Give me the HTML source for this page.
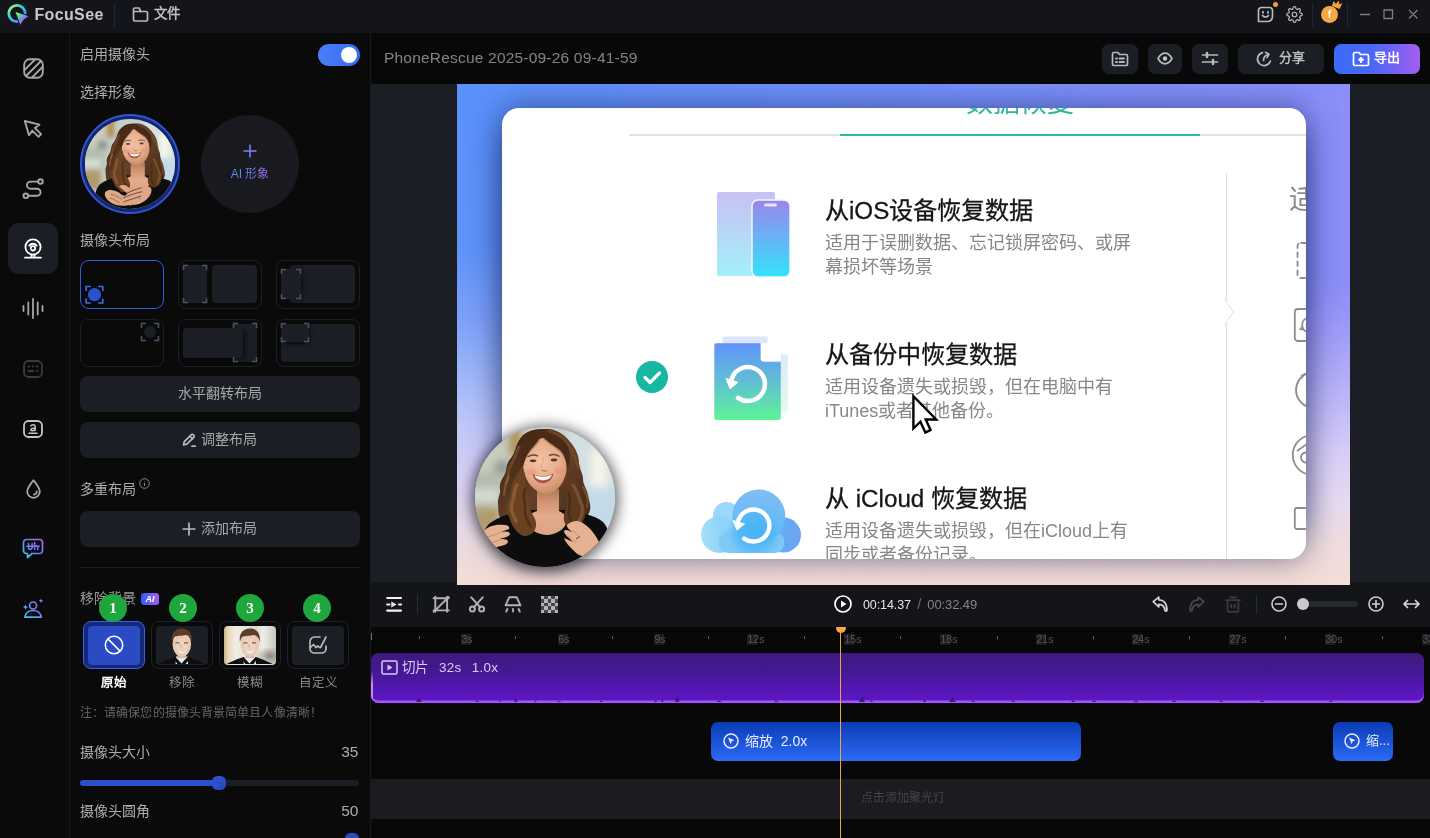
<!DOCTYPE html>
<html lang="zh-CN">
<head>
<meta charset="utf-8">
<title>FocuSee</title>
<style>
*{margin:0;padding:0;box-sizing:border-box}
html,body{width:1430px;height:838px;overflow:hidden;background:#0a0a0a}
body{font-family:"Liberation Sans",sans-serif;color:#b4b4b4;position:relative;font-size:14px;will-change:transform}
.abs{position:absolute}
svg{position:absolute;overflow:visible}
.ic{fill:none;stroke:#b9b9b9;stroke-width:1.7;stroke-linecap:round;stroke-linejoin:round}
/* title bar */
#titlebar{left:0;top:0;width:1430px;height:34px;background:#14151a}
#brand{left:34.500px;top:5px;font-weight:bold;font-size:16px;line-height:20px;color:#c9c9c9;letter-spacing:.35px}
#file{left:154px;top:4px;font-size:13.500px;line-height:20px;color:#c4c4c4;-webkit-text-stroke:.4px #c4c4c4}
.vsep{width:1px;background:#23273a}
/* left bar */
#leftbar{left:0;top:33px;width:70px;height:805px;background:#0a0a0a;border-right:1px solid #17181c}
#panel{left:70px;top:33px;width:300px;height:805px;background:#0a0a0a}
#sel{left:8px;top:223px;width:50px;height:51px;border-radius:11px;background:#1c1e26}
.lbl{color:#adadad;font-size:14px;line-height:18px;white-space:nowrap}
.btn{background:#1c1e26;border-radius:8px;color:#a8a8a8;font-size:14px;text-align:center;white-space:nowrap}
.lay{width:84px;height:48px;border:1px solid #1c1e26;border-radius:8px;background:#0a0a0a}
.lay i{position:absolute;background:#1c1e26;border-radius:4px}
/* main */
#hdr{left:371px;top:33px;width:1059px;height:51px;background:#080808}
#ptitle{left:384px;top:48px;font-size:15.5px;line-height:20px;color:#848484;white-space:nowrap;letter-spacing:.2px}
.hb{top:44px;height:30px;border-radius:7px;background:#1c1e26}
#stage{left:371px;top:84px;width:1059px;height:498px;background:#1c1e26}
#canvas{z-index:2;left:457px;top:84px;width:893px;height:501px;overflow:hidden;background:#b9b2f5}
#card{left:45px;top:24px;width:804px;height:451px;border-radius:17px;background:#fff;overflow:hidden}
#cardsh{left:45px;top:24px;width:804px;height:451px;border-radius:17px;box-shadow:0 0 30px rgba(5,15,60,.5)}
.t1{font-size:24.200px;line-height:30px;color:#161616;white-space:nowrap;filter:blur(.35px);margin-top:1px;-webkit-text-stroke:.3px #161616}
.t2{font-size:18px;line-height:24px;color:#878787;white-space:nowrap;filter:blur(.35px);margin-top:1px}
/* timeline */
#tbar{left:371px;top:582px;width:1059px;height:45px;background:#141519}
#tl{left:371px;top:627px;width:1059px;height:211px;background:#080808}
.rl{top:633px;width:30px;margin-left:-15px;text-align:center;font-size:10.5px;line-height:12px;color:#585858}
.tk{top:636px;width:1px;height:3px;background:#5a5a5a}
#clip{left:371px;top:653px;width:1053px;height:50px;border-radius:7.500px;background:linear-gradient(#3c1a7c 0%,#47189a 45%,#5e16c8 96%);overflow:hidden;box-shadow:inset 0 -2.500px 0 #a354ff}
#z1{left:711px;top:721.500px;width:370px;height:39.500px;border-radius:7px;background:linear-gradient(#0b3bb4,#2b6bf6)}
#z2{left:1333px;top:721.500px;width:60px;height:39.500px;border-radius:7px;background:linear-gradient(#0b3bb4,#2b6bf6)}
#spot{left:371px;top:779px;width:1059px;height:40px;background:#1b1c21}
#ph{left:840px;top:630px;width:1.200px;height:208px;background:#eea443}
.gb{top:594px;width:28px;height:28px;border-radius:14px;background:#1fa63d;color:#fff;font-family:"Liberation Serif",serif;font-weight:bold;font-size:15px;line-height:28px;text-align:center}
.bl{top:675px;width:60px;text-align:center;font-size:12.5px;line-height:16px;color:#8a8a8a;white-space:nowrap}
.rb{top:634px;width:9.500px;height:10.500px;background:#1b1d23}
</style>
</head>
<body>
<svg width="0" height="0" style="left:0;top:0">
<defs>
<filter id="bl1" x="-10%" y="-10%" width="120%" height="120%"><feGaussianBlur stdDeviation="0.75"/></filter>
<filter id="blh" x="-5%" y="-5%" width="110%" height="110%"><feGaussianBlur stdDeviation="0.45"/></filter>
<filter id="bl3" x="-20%" y="-20%" width="140%" height="140%"><feGaussianBlur stdDeviation="4"/></filter>
<clipPath id="c140"><circle cx="70" cy="70" r="70"/></clipPath>
<linearGradient id="hairg" x1="0" y1="0" x2="1" y2="1"><stop offset="0" stop-color="#341e11"/><stop offset=".5" stop-color="#644026"/><stop offset="1" stop-color="#3e2415"/></linearGradient>
<radialGradient id="faceg" gradientUnits="userSpaceOnUse" cx="66" cy="34" r="34"><stop offset="0" stop-color="#f3c4a4"/><stop offset=".55" stop-color="#e8ae8c"/><stop offset="1" stop-color="#c98a66"/></radialGradient>
<linearGradient id="skng" gradientUnits="userSpaceOnUse" x1="0" y1="62" x2="0" y2="108"><stop offset="0" stop-color="#b07656"/><stop offset=".3" stop-color="#d29673"/><stop offset=".6" stop-color="#e2ab89"/><stop offset="1" stop-color="#dca482"/></linearGradient>
<g id="wbg"><rect width="140" height="140" fill="#c3cfca"/>
 <g filter="url(#bl3)">
  <rect x="-5" y="-5" width="40" height="50" fill="#c9cdbd"/>
  <rect x="34" y="-5" width="11" height="34" fill="#b08a44"/>
  <ellipse cx="27" cy="42" rx="8" ry="9" fill="#8a918a"/>
  <rect x="-5" y="45" width="36" height="35" fill="#b4bcad"/>
  <rect x="-5" y="62" width="30" height="14" fill="#d6dcd2"/>
  <rect x="-5" y="80" width="30" height="30" fill="#b39a6c"/>
  <rect x="92" y="-5" width="55" height="110" fill="#d3dfe2"/>
  <rect x="116" y="22" width="16" height="40" fill="#f4f6e6"/>
  <rect x="100" y="60" width="45" height="40" fill="#c4dae8"/>
 </g>
 </g>
<g id="wbody"><g filter="url(#bl1)">
  <!-- hair back (wavy outline) -->
  <path d="M66 2C55 2 47 7 43 15 40 21 40 26 36 31 31 36 32 42 30 47 27 52 24 56 25 62 26 67 22 71 23 77 24 83 22 88 27 93 30 98 31 103 37 106 44 111 54 110 60 106L88 103C93 107 101 106 106 101 111 97 111 91 114 86 117 80 114 74 113 68 112 62 108 58 108 52 108 46 104 42 104 36 104 29 101 22 96 16 91 9 83 3 74 2 71 2 68 2 66 2Z" fill="url(#hairg)"/>
  <!-- body -->
  <path d="M6 140C6 120 6 104 14 97 22 90 36 86 50 83L92 83C104 85 120 88 128 95 136 103 136 122 134 140Z" fill="#0a0a0d"/>
  <!-- neck/chest -->
  <path d="M62 62h22v22c6 3 9 6 8 11-3 8-12 13-20 13s-18-5-21-13c-1-5 3-8 11-11z" fill="url(#skng)"/>
  <!-- face -->
  <path d="M48 36C48 20 58 11 70 11 83 11 92 21 92 36 92 48 88 58 80 64 75 68 67 68 62 64 53 58 48 48 48 36Z" fill="url(#faceg)"/>
  <ellipse cx="56.500" cy="45" rx="5" ry="3.500" fill="#e28e78" opacity=".45"/><ellipse cx="84" cy="44" rx="5" ry="3.500" fill="#e28e78" opacity=".45"/>
  <!-- bangs -->
  <path d="M64 3C54 6 47 16 46 28 45 34 45 40 47 44 49 34 53 27 59 21 63 17 66 12 66 8 70 16 78 19 84 24 89 28 92 36 92 44 95 36 96 26 92 18 88 10 78 3 64 3Z" fill="#43261450"/>
  <path d="M64 3C54 6 47 16 46 28 45 34 45 40 47 44 49 34 52 26 58 20 62 16 65 11 66 7 70 14 79 18 85 23 90 28 92 36 92 44 95 36 96 26 92 18 88 10 78 3 64 3Z" fill="#4a2b18"/>
  <!-- front locks, wavy -->
  <path d="M47 38C45 45 41 49 38 55 35 61 37 66 34 72 31 78 31 84 34 90 36 96 39 103 46 108 52 111 60 107 61 99 62 92 57 88 55 82 53 76 54 70 52 64 50 58 51 52 50 47Z" fill="#6b4222"/>
  <path d="M92 40C94 47 96 52 100 58 104 64 104 70 108 76 112 83 111 90 107 96 104 101 97 103 93 100 88 96 88 90 90 84 92 78 92 72 92 66 92 58 92 48 92 40Z" fill="#5c381e"/>
  <!-- hair light / dark strokes (soft) -->
  <g fill="none" stroke-linecap="round" filter="url(#bl1)">
   <path d="M44 20c-4 8-4 12-8 18-4 6-2 12-5 18" stroke="#8a5a34" stroke-width="3" opacity=".55"/>
   <path d="M42 58c-4 6-2 12-5 18-2 6 1 12 4 18" stroke="#9a6a40" stroke-width="3.500" opacity=".6"/>
   <path d="M50 62c-3 8 1 14 0 20s2 12 6 18" stroke="#3a2012" stroke-width="2.500" opacity=".55"/>
   <path d="M34 50c-4 6-4 12-5 18" stroke="#a5744a" stroke-width="2" opacity=".5"/>
   <path d="M98 58c5 6 5 12 8 18 3 7 1 12-2 18" stroke="#8e5e38" stroke-width="3.500" opacity=".6"/>
   <path d="M94 66c2 8 0 14 0 20 0 5 2 8 4 11" stroke="#3a2012" stroke-width="2.500" opacity=".5"/>
   <path d="M74 4c10 3 19 9 24 22 2 6 4 10 6 14" stroke="#7a4e2c" stroke-width="3" opacity=".6"/>
   <path d="M108 60c3 6 6 12 4 20" stroke="#9a6a40" stroke-width="2" opacity=".5"/>
  </g>
  <!-- mouth -->
  <path d="M57.500 47c6 3 15 3 21-.8-1 6.500-5.500 10-10.500 10s-9.500-3.200-10.500-9.200z" fill="#a9544a"/>
  <path d="M59.500 48.200c5 2 12.500 2 17.500-.4-1 3.600-4.500 5.400-8.700 5.400s-7.800-1.800-8.800-5z" fill="#fbf6f2"/>
  <!-- eyes / brows / nose -->
  <ellipse cx="58" cy="33.800" rx="3.200" ry="1.400" fill="#3a2a22" opacity=".9"/><ellipse cx="79" cy="33" rx="3.200" ry="1.400" fill="#3a2a22" opacity=".9"/>
  <path d="M52.500 30c3-2.200 7.500-2.400 10.500-.8M74 28.700c3-1.600 7.500-1.400 10.500.8" stroke="#5a3a26" stroke-width="1.400" fill="none" opacity=".9"/>
  <path d="M66.500 42.500c1.200 1.600 3.500 2 5.500.8" stroke="#b57a5c" stroke-width="1.200" fill="none"/>
  <path d="M68.500 30c-.5 4-1.500 8-2.500 11" stroke="#c98e6e" stroke-width="1" fill="none" opacity=".6"/>
 </g>
</g>
<g id="whands1" filter="url(#bl1)">
  <!-- hands -->
  <g fill="#e6b093">
   <path d="M9 104c4-5 12-7 20-6 4 0 6 2 5 4l-8 3c4-1 9-1 9 2 0 2-6 4-10 5 4 0 8 0 8 3-1 3-7 4-11 5-6 1-12-3-14-8-1-3-1-6 1-8z"/>
   <path d="M92 98c4-4 10-5 14-3 8 4 14 12 18 20 2 5-2 11-8 13-6 3-12 1-16-3-6-6-10-10-11-14l9 4c-4-4-9-8-9-11 1-2 5-1 9 2-3-3-7-6-6-8z"/>
  </g>
  <path d="M12 110c5-1 10-3 14-5M14 116c5-1 9-2 13-4M97 103c3 2 6 5 8 8M93 109c3 2 6 4 8 7" stroke="#b8805f" stroke-width=".9" fill="none" opacity=".8"/>
  <path d="M101 112l3.500-2.500" stroke="#6a6a72" stroke-width="1.300"/>
</g>
<g id="whands2" filter="url(#bl1)">
 <g fill="#e0a688">
  <path d="M32 113c5-4 12-3 20 1l18 11c4 3 2 8-3 9-9 2-20 1-28-5-7-5-10-12-7-16z"/>
  <path d="M103 108c-3-4-9-5-15-3-9 3-20 9-27 15-4 4-5 9-1 12 8 4 20 3 29-2 9-5 16-14 14-22z"/>
  <path d="M53 105c3-3 9-3 13 0l9 8-7 5z"/>
 </g>
 <path d="M62 117c8-4 17-8 26-10M59 123c9-4 20-8 30-10M60 129c8-3 18-6 27-9" stroke="#3a2418" stroke-width="1.300" fill="none" opacity=".8"/>
 <path d="M40 117c6 1 12 4 17 8M38 123c6 1 11 4 16 8" stroke="#7a4e38" stroke-width="1.100" fill="none" opacity=".8"/>
 <path d="M50 108l8 10M72 134c6 1 14 0 20-3" stroke="#0a0a0d" stroke-width="2" fill="none" opacity=".7"/>
 <path d="M82 121l4 3" stroke="#6a6a72" stroke-width="1.300"/>
</g>
<symbol id="woman" viewBox="0 0 140 140" overflow="hidden"><g clip-path="url(#c140)"><use href="#wbg"/><use href="#wbody"/><use href="#whands1"/></g></symbol>
<symbol id="woman2" viewBox="0 0 140 140" overflow="hidden"><g clip-path="url(#c140)"><use href="#wbg"/><g transform="translate(9,5)"><use href="#wbody"/></g><use href="#whands2"/></g></symbol>
<symbol id="man" viewBox="0 0 52 38" overflow="hidden">
 <g filter="url(#bl1)">
  <path d="M1 40C4 36 12 34 19.500 31L32 31C39 34 47 36 51 40Z" fill="#0d0d11"/>
  <path d="M20 30.500h11.500l.5 8h-12.500z" fill="#e9e9ef"/>
  <path d="M19.500 31l6 6.500 6-6.500 1.500 2-4 6h-7l-4-6z" fill="#111116"/>
  <rect x="21.500" y="25" width="8.500" height="7" fill="#d8b49c"/>
  <ellipse cx="25.800" cy="18" rx="9.300" ry="12.800" fill="#e8cab2"/>
  <ellipse cx="25.800" cy="20" rx="6" ry="8" fill="#efd6c2" opacity=".7"/>
  <path d="M16 16C14.500 8 19 2.500 26 2.500 33 2.500 37 8 35.500 16 35 12 33 9.500 30 9 26 10 20.500 9.500 18 11 17 12.500 16.500 14 16 16Z" fill="#5c3e2a"/>
  <path d="M21.800 24.500c2.500 1.300 5.500 1.300 8 0-1 2-2.500 3-4 3s-3-1-4-3z" fill="#f6ecec"/>
  <path d="M19.500 17.200c1.200-.6 2.600-.6 3.800 0M28 17.200c1.200-.6 2.600-.6 3.800 0" stroke="#4a3426" stroke-width="1" fill="none"/>
  <path d="M25 18v4" stroke="#cfa88e" stroke-width=".8"/>
 </g>
</symbol>
</defs>
</svg>
<!-- TITLE BAR -->
<div class="abs" id="titlebar"></div>
<div class="abs" id="brand">FocuSee</div>
<div class="abs vsep" style="left:114px;top:3px;height:24px"></div>
<div class="abs" id="file">文件</div>
<div class="abs vsep" style="left:1312px;top:3px;height:23px"></div>
<div class="abs vsep" style="left:1347px;top:3px;height:23px"></div>

<!-- LEFT BAR -->
<div class="abs" id="leftbar"></div>
<div class="abs" id="sel"></div>
<!-- left bar icons -->
<svg style="left:23px;top:58px" width="21" height="21" viewBox="0 0 21 21" fill="none" stroke="#a6a6a6" stroke-width="1.900" stroke-linecap="round"><defs><clipPath id="rsq"><rect x="1.200" y="1.200" width="18.600" height="18.600" rx="5.500"/></clipPath></defs><rect x="1.200" y="1.200" width="18.600" height="18.600" rx="5.500"/><g clip-path="url(#rsq)"><path d="M1 12.500L12.500 1M2.500 18.500L18.500 2.500M8.500 20L20 8.500"/></g></svg>
<svg style="left:23px;top:119px" width="21" height="21" viewBox="0 0 21 21" fill="none" stroke="#a6a6a6" stroke-width="1.900" stroke-linejoin="round"><path d="M1.800 2l4.200 14.200 3.300-4.600 6.200 6.200 2.600-2.600-6.200-6.200 4.600-3.300z"/></svg>
<svg style="left:22px;top:178px" width="23" height="22" viewBox="0 0 23 22" fill="none" stroke="#a6a6a6" stroke-width="1.900" stroke-linecap="round"><circle cx="18.500" cy="3.600" r="2.300"/><circle cx="3.800" cy="17.800" r="2.300"/><path d="M16.200 3.600H8.500a3.500 3.500 0 0 0 0 7.100h6.500a3.500 3.500 0 0 1 0 7.100H6.100"/></svg>
<svg style="left:24px;top:238px" width="18" height="21" viewBox="0 0 18 21" fill="none" stroke="#fff" stroke-width="1.800" stroke-linecap="round"><circle cx="9" cy="9" r="7.600"/><circle cx="9" cy="10.300" r="2.200"/><path d="M5.300 7.600a4.600 4.600 0 0 1 7.400 0M7.600 16.600v3M10.400 16.600v3M1 19.700h16"/></svg>
<svg style="left:22px;top:298px" width="22" height="21" viewBox="0 0 22 21" fill="none" stroke="#a6a6a6" stroke-width="1.800" stroke-linecap="round"><path d="M1.500 8v5M6.300 4.500v12M11 1v19M15.700 4.500v12M20.500 8v5"/></svg>
<svg style="left:23px;top:360px" width="20" height="18" viewBox="0 0 20 18" fill="none" stroke="#3b3b3b" stroke-width="1.800" stroke-linecap="round"><rect x="1" y="1" width="18" height="16" rx="4.500"/><path d="M5.500 6.500h.6M9.700 6.500h.6M13.900 6.500h.6M5.500 11h5M13.900 11h.6" stroke-width="2"/></svg>
<svg style="left:23px;top:420px" width="20" height="18" viewBox="0 0 20 18" fill="none" stroke="#c4c4c4" stroke-width="1.800" stroke-linecap="round"><rect x="1" y="1" width="18" height="16" rx="4.500"/><path d="M6 13.300h8" stroke-width="1.600"/><path d="M12.200 10.500V6.800c0-1.300-.9-2-2.200-2-1.100 0-1.900.4-2.300 1.200M12.200 8.200c-2.500-.2-4.300.3-4.300 1.500 0 .7.700 1.100 1.600 1.100 1.300 0 2.700-.7 2.700-2" stroke-width="1.500"/></svg>
<svg style="left:26px;top:479px" width="15" height="20" viewBox="0 0 15 20" fill="none" stroke="#a6a6a6" stroke-width="1.800" stroke-linecap="round" stroke-linejoin="round"><path d="M7.500 1.200C5 4.500 1.200 8.800 1.200 12.500a6.300 6.300 0 0 0 12.600 0C13.800 8.800 10 4.500 7.500 1.200z"/><path d="M10.800 12.300a3 3 0 0 1-2.800 3.200"/></svg>
<svg style="left:22px;top:538px" width="22" height="22" viewBox="0 0 22 22" fill="none" stroke="url(#gi1)" stroke-width="1.700" stroke-linecap="round" stroke-linejoin="round"><defs><linearGradient id="gi1" gradientUnits="userSpaceOnUse" x1="20" y1="0" x2="2" y2="20"><stop offset="0" stop-color="#c65cf0"/><stop offset=".5" stop-color="#6a7cf8"/><stop offset="1" stop-color="#35d0f8"/></linearGradient></defs><path d="M4.500 1.500h13a3 3 0 0 1 3 3v8a3 3 0 0 1-3 3H10l-4.500 4v-4H4.500a3 3 0 0 1-3-3v-8a3 3 0 0 1 3-3z"/><path d="M6.500 5.500v4a1.800 1.800 0 0 0 3.600 0v-4M12.600 4.500v7M12.600 8.500c.8-1.200 3.200-1.300 3.200.6v2.400M4.800 8.300h12.400" stroke-width="1.500"/></svg>
<svg style="left:22px;top:597px" width="22" height="22" viewBox="0 0 22 22" fill="none" stroke="url(#gi2)" stroke-width="1.700" stroke-linecap="round" stroke-linejoin="round"><defs><linearGradient id="gi2" gradientUnits="userSpaceOnUse" x1="20" y1="0" x2="2" y2="22"><stop offset="0" stop-color="#d255ee"/><stop offset=".45" stop-color="#7a7cf8"/><stop offset="1" stop-color="#2fd6f8"/></linearGradient></defs><circle cx="11.100" cy="8.500" r="3.500"/><path d="M3 20.200c.5-4.200 4-6.700 8.100-6.700s7.600 2.500 8.100 6.700z"/><path d="M3.500 7.500l.8 1.800 1.800.8-1.800.8-.8 1.800-.8-1.800-1.800-.8 1.800-.8zM19 1.500l.7 1.600 1.600.7-1.600.7-.7 1.600-.7-1.600-1.600-.7 1.600-.7z" fill="url(#gi2)" stroke="none"/></svg>


<!-- PANEL -->
<div class="abs" id="panel"></div>
<div class="abs lbl" style="left:80px;top:45px">启用摄像头</div>
<div class="abs" style="left:318px;top:44px;width:42px;height:22px;border-radius:11px;background:linear-gradient(90deg,#4a80f8,#3669f3)"></div>
<div class="abs" style="left:341px;top:47px;width:16px;height:16px;border-radius:8px;background:#fff"></div>
<div class="abs lbl" style="left:80px;top:83px">选择形象</div>
<!-- avatar -->
<div class="abs" style="left:80px;top:114px;width:100px;height:100px;border-radius:50%;background:#14266e;border:2px solid #2f55d6"></div>
<svg style="left:85px;top:119px" width="90" height="90" viewBox="0 0 140 140"><use href="#woman2"/></svg>
<div class="abs" style="left:201px;top:115px;width:98px;height:98px;border-radius:50%;background:#191a1f"></div>
<svg style="left:242px;top:143px" width="16" height="16" viewBox="0 0 16 16"><defs><linearGradient id="gp" gradientUnits="userSpaceOnUse" x1="1" y1="0" x2="15" y2="0"><stop offset="0" stop-color="#4f8df7"/><stop offset="1" stop-color="#a868f2"/></linearGradient></defs><path d="M8 1.5v13" stroke="#7a7cf5" stroke-width="1.6" fill="none"/><path d="M1.5 8h13" stroke="url(#gp)" stroke-width="1.6" fill="none"/></svg>
<div class="abs" style="left:225px;top:166px;width:50px;text-align:center;font-size:12px;line-height:16px;white-space:nowrap;background:linear-gradient(90deg,#4b9af8,#6a7cf5 50%,#c15bf0);-webkit-background-clip:text;background-clip:text;color:transparent">AI 形象</div>
<div class="abs lbl" style="left:80px;top:231px">摄像头布局</div>
<!-- layouts row 1 -->
<div class="abs lay" style="left:80px;top:260px;height:49px;border:1.5px solid #2f5fe0;border-radius:9px"></div>
<div class="abs lay" style="left:178px;top:260px;height:49px"><i style="left:4px;top:4px;width:24px;height:38px"></i><i style="left:33px;top:4px;width:45px;height:38px"></i></div>
<div class="abs lay" style="left:276px;top:260px;height:49px"><i style="left:12px;top:4px;width:66px;height:38px"></i><i style="left:4px;top:8px;width:20px;height:30px;box-shadow:2px 0 4px rgba(0,0,0,.5)"></i></div>
<!-- row 2 -->
<div class="abs lay" style="left:80px;top:318.500px"></div>
<div class="abs lay" style="left:178px;top:319px"><i style="left:54px;top:4px;width:24px;height:38px"></i><i style="left:4px;top:8px;width:60px;height:30px;box-shadow:2px 1px 4px rgba(0,0,0,.6)"></i></div>
<div class="abs lay" style="left:276px;top:319px"><i style="left:4px;top:4px;width:74px;height:38px"></i><i style="left:4px;top:4px;width:28px;height:18px;box-shadow:1px 2px 4px rgba(0,0,0,.6)"></i></div>
<!-- layout marker svgs -->
<svg style="left:80px;top:260px" width="280" height="108" viewBox="0 0 280 108" fill="none" stroke-width="1.6">
  <g stroke="#3b6cf0"><path d="M6.200 31v-4.500h4.500M18.300 26.500h4.500v4.500M22.800 38.500v4.500h-4.500M10.700 43h-4.500v-4.500"/><circle cx="14.500" cy="34.700" r="6.600" fill="#2a52cc" stroke="none"/></g>
 <g stroke="#4a5168">
  <path d="M103.500 10v-4.500h4.500M122 5.500h4.500v4.500M126.500 38v4.500h-4.500M108 42.500h-4.500v-4.500"/>
  <path d="M201.500 14v-4.500h4.500M216 9.500h4.500v4.500M220.500 34v4.500h-4.500M206 38.500h-4.500v-4.500"/>
  <path d="M61.500 68v-4.500h4.500M74 63.500h4.500v4.500M78.500 76v4.500h-4.500M66 80.500h-4.500v-4.500"/>
  <path d="M153.500 68v-4.500h4.500M172 63.500h4.500v4.500M176.500 97v4.500h-4.500M158 101.500h-4.500v-4.500"/>
  <path d="M201.500 68v-4.500h4.500M224 63.500h4.500v4.500M228.500 77v4.500h-4.500M206 81.500h-4.500v-4.500"/>
 </g>
 <circle cx="70" cy="72" r="6" fill="#1c1e26" stroke="none"/>
</svg>
<div class="abs btn" style="left:80px;top:376px;width:280px;height:36px;line-height:35px">水平翻转布局</div>
<div class="abs btn" style="left:80px;top:422px;width:280px;height:36px;line-height:35px;padding-left:18px">调整布局</div>
<svg style="left:181px;top:432px" width="16" height="16" viewBox="0 0 16 16" class="ic" stroke-width="1.5"><path d="M2.500 13l.8-3.300 6.800-6.900a1.600 1.600 0 0 1 2.300 0l.3.300a1.600 1.600 0 0 1 0 2.300l-6.900 6.800zM8.800 4.200l2.800 2.800M11 14.200h3.200"/></svg>
<div class="abs lbl" style="left:80px;top:480px">多重布局</div>
<svg style="left:139px;top:478px" width="11" height="11" viewBox="0 0 11 11" fill="none" stroke="#8a8a8a" stroke-width="1"><circle cx="5.500" cy="5.500" r="4.800"/><path d="M5.500 5v3M5.500 3v.6"/></svg>
<div class="abs btn" style="left:80px;top:511px;width:280px;height:36px;line-height:35px;padding-left:18px">添加布局</div>
<svg style="left:182px;top:522px" width="14" height="14" viewBox="0 0 14 14" class="ic" stroke-width="1.6"><path d="M7 1.200v11.600M1.200 7h11.600"/></svg>
<div class="abs" style="left:80px;top:567px;width:280px;height:1px;background:#1c1c20"></div>
<div class="abs lbl" style="left:80px;top:589px;color:#9a9a9a">移除背景</div>
<div class="abs" style="left:141px;top:593px;width:18px;height:12px;border-radius:3px;background:linear-gradient(90deg,#2f5cf5,#a85cf0);color:#fff;font-size:9px;font-weight:bold;font-style:italic;line-height:12px;text-align:center">AI</div>
<!-- bg items -->
<div class="abs" style="left:83px;top:621px;width:62px;height:48px;border-radius:8px;background:#15287a;border:1.500px solid #3563e6"></div>
<div class="abs" style="left:88px;top:626px;width:52px;height:38.500px;border-radius:4px;background:#2a4bc4"></div>
<svg style="left:104px;top:635px" width="20" height="20" viewBox="0 0 20 20" fill="none" stroke="#fff" stroke-width="1.500"><circle cx="10" cy="10" r="8.700"/><path d="M3.900 3.900l12.200 12.200"/></svg>
<div class="abs" style="left:151px;top:621px;width:62px;height:48px;border-radius:8px;border:1px solid #1d2030"></div>
<div class="abs" style="left:219px;top:621px;width:62px;height:48px;border-radius:8px;border:1px solid #1d2030"></div>
<div class="abs" style="left:287px;top:621px;width:62px;height:48px;border-radius:8px;border:1px solid #1d2030"></div>
<div class="abs" style="left:156px;top:626px;width:52px;height:38.500px;border-radius:4px;background:#1c1e26;overflow:hidden"><svg style="left:0;top:0" width="52" height="38" viewBox="0 0 52 38"><use href="#man"/></svg></div>
<div class="abs" style="left:224px;top:626px;width:52px;height:38.500px;border-radius:4px;background:radial-gradient(ellipse 14px 9px at 46px 30px,#8c8a80 0,rgba(150,148,138,0) 100%),linear-gradient(90deg,#c9b284 0,#e6d8ba 8%,#f0ede5 22%,#e5e3db 45%,#dad7cd 60%,#efede7 75%,#cac6ba 100%);overflow:hidden"><svg style="left:0;top:0" width="52" height="38" viewBox="0 0 52 38"><use href="#man"/></svg></div>
<div class="abs" style="left:292px;top:626px;width:52px;height:38.500px;border-radius:4px;background:#1c1e26"></div>
<svg style="left:308px;top:635px" width="20" height="20" viewBox="0 0 20 20" class="ic" stroke-width="1.600"><path d="M12 2H6.500A4.500 4.500 0 0 0 2 6.500v7A4.500 4.500 0 0 0 6.500 18h7a4.500 4.500 0 0 0 4.500-4.500V11M18 2l-5.500 10.500M2.500 12.500l3-3 2.500 3 2-1.500 1.500 1.500"/></svg>
<!-- green badges -->
<div class="abs gb" style="left:99px">1</div><div class="abs gb" style="left:169px">2</div><div class="abs gb" style="left:236px">3</div><div class="abs gb" style="left:303px">4</div>
<div class="abs bl" style="left:84px;color:#fff;font-weight:bold">原始</div>
<div class="abs bl" style="left:152px">移除</div>
<div class="abs bl" style="left:220px">模糊</div>
<div class="abs bl" style="left:288px">自定义</div>
<div class="abs" style="left:80px;top:705px;font-size:12px;line-height:16px;color:#666;white-space:nowrap;letter-spacing:.1px">注：请确保您的摄像头背景简单且人像清晰！</div>
<div class="abs lbl" style="left:80px;top:743px">摄像头大小</div>
<div class="abs lbl" style="left:300px;top:743px;width:58.500px;text-align:right;font-size:15.500px">35</div>
<div class="abs" style="left:80px;top:780px;width:279px;height:6px;border-radius:3px;background:#1c1e26"></div>
<div class="abs" style="left:80px;top:780px;width:140px;height:6px;border-radius:3px;background:#2a4fc8"></div>
<div class="abs" style="left:212px;top:776px;width:14px;height:14px;border-radius:5.500px;background:linear-gradient(135deg,#2f56d2,#2545b4)"></div>
<div class="abs lbl" style="left:80px;top:802px">摄像头圆角</div>
<div class="abs lbl" style="left:300px;top:802px;width:58.500px;text-align:right;font-size:15.500px">50</div>
<div class="abs" style="left:345px;top:832.500px;width:14px;height:14px;border-radius:5.500px;background:#2a4dc2"></div>
<!--PANEL-END-->

<!-- MAIN HEADER -->
<div class="abs" id="hdr"></div>
<div class="abs" id="ptitle">PhoneRescue 2025-09-26 09-41-59</div>
<div class="abs hb" style="left:1102px;width:36px"></div>
<div class="abs hb" style="left:1148px;width:34px"></div>
<div class="abs hb" style="left:1192px;width:36px"></div>
<div class="abs hb" style="left:1238px;width:86px"></div>
<div class="abs hb" style="left:1334px;width:86px;background:linear-gradient(90deg,#3a6bf7 0%,#4a68f6 45%,#a45df0 100%)"></div>
<!-- header button icons -->
<svg style="left:1111px;top:50px" width="18" height="17" viewBox="0 0 18 17" class="ic" stroke="#cfcfcf" stroke-width="1.700"><path d="M1.500 4.500v9.500a1.500 1.500 0 0 0 1.500 1.500h12a1.500 1.500 0 0 0 1.500-1.500V6A1.500 1.500 0 0 0 15 4.500H8.500L7 2.500H3A1.500 1.500 0 0 0 1.500 4z"/><path d="M5 8.500h1M8.500 8.500h4.500M5 12h1M8.500 12h4.500" stroke-width="1.900"/></svg>
<svg style="left:1157px;top:52px" width="16" height="13" viewBox="0 0 16 13" class="ic" stroke="#cfcfcf" stroke-width="1.600"><path d="M1 6.500C3 3 5.500 1.200 8 1.200S13 3 15 6.500C13 10 10.500 11.800 8 11.800S3 10 1 6.500z"/><circle cx="8" cy="6.500" r="1.700" fill="#cfcfcf" stroke-width="1.200"/></svg>
<svg style="left:1201px;top:51px" width="18" height="15" viewBox="0 0 18 15" class="ic" stroke="#cfcfcf" stroke-width="1.700"><path d="M1.500 4h15M1.500 11h15"/><path d="M6 2v4M12 9v4" stroke-width="2.600"/></svg>
<svg style="left:1256px;top:50px" width="16" height="17" viewBox="0 0 16 17" class="ic" stroke="#c9c9c9" stroke-width="1.800"><path d="M6.500 2.600A6.600 6.600 0 1 0 14.400 11"/><path d="M7.500 10.500c0-3.500 1.800-5.500 5-6M9.500 2.300l3.500 2-2 3.300"/></svg>
<div class="abs" style="left:1279px;top:49px;font-size:13px;line-height:18px;color:#c4c4c4;-webkit-text-stroke:.35px #c4c4c4;white-space:nowrap">分享</div>
<svg style="left:1352px;top:50px" width="18" height="17" viewBox="0 0 18 17" fill="none" stroke="#fff" stroke-width="1.700" stroke-linejoin="round"><path d="M1.500 4.500V14A1.500 1.500 0 0 0 3 15.500h12a1.500 1.500 0 0 0 1.500-1.500V6A1.500 1.500 0 0 0 15 4.500H8.500L7 2.500H3A1.500 1.500 0 0 0 1.500 4z"/><path d="M9 13V8.500M6.500 10.500L9 8l2.500 2.500" stroke-width="1.800"/></svg>
<div class="abs" style="left:1374px;top:49px;font-size:13px;line-height:18px;color:#fff;-webkit-text-stroke:.4px #fff;white-space:nowrap">导出</div>
<!-- title bar icons -->
<svg style="left:7px;top:3px" width="24" height="24" viewBox="0 0 24 24"><defs><linearGradient id="lg1" gradientUnits="userSpaceOnUse" x1="3" y1="2" x2="17" y2="19"><stop offset="0" stop-color="#e8e04a"/><stop offset=".3" stop-color="#3be0c0"/><stop offset=".6" stop-color="#38b0f5"/><stop offset="1" stop-color="#5a78f5"/></linearGradient><linearGradient id="lg2" gradientUnits="userSpaceOnUse" x1="9" y1="8" x2="18" y2="21"><stop offset="0" stop-color="#f0e44a"/><stop offset=".35" stop-color="#46e09a"/><stop offset=".65" stop-color="#8a7cf5"/><stop offset="1" stop-color="#e058ee"/></linearGradient></defs><circle cx="10" cy="10.500" r="8.200" fill="none" stroke="url(#lg1)" stroke-width="2.800"/><path d="M7.700 8.200L22.300 13 16.500 17.200 13.200 22.800z" fill="url(#lg2)" stroke="#14151a" stroke-width="1" stroke-linejoin="round"/></svg>
<svg style="left:132px;top:7px" width="17" height="15" viewBox="0 0 17 15" class="ic" stroke="#b0b0b0" stroke-width="1.600"><path d="M1.500 4.500v8a1.500 1.500 0 0 0 1.500 1.500h11a1.500 1.500 0 0 0 1.500-1.500V6A1.500 1.500 0 0 0 14 4.500H1.500zM1.500 5V2.500A1.500 1.500 0 0 1 3 1h4l1.800 3.500"/></svg>
<svg style="left:1257px;top:6px" width="17" height="17" viewBox="0 0 17 17" class="ic" stroke="#7e7e7e" stroke-width="1.700"><path d="M4.500 1.500h8a3 3 0 0 1 3 3v6a5 5 0 0 1-5 5H1.500v-11a3 3 0 0 1 3-3z"/><path d="M6 5.500v1.500M11 5.500v1.500M5.500 9.500c1.500 2 4.500 2 6 0"/></svg>
<div class="abs" style="left:1273px;top:2px;width:5px;height:5px;border-radius:3px;background:#f5a03a"></div>
<svg style="left:1286px;top:6px" width="17" height="17" viewBox="0 0 24 24" class="ic" stroke="#7e7e7e" stroke-width="2.500"><circle cx="12" cy="12" r="3.200"/><path d="M19.400 15a1.650 1.650 0 0 0 .33 1.820l.06.06a2 2 0 1 1-2.830 2.830l-.06-.06a1.650 1.650 0 0 0-1.820-.33 1.650 1.650 0 0 0-1 1.510V21a2 2 0 1 1-4 0v-.09A1.650 1.650 0 0 0 9 19.400a1.650 1.650 0 0 0-1.820.33l-.06.06a2 2 0 1 1-2.830-2.830l.06-.06a1.650 1.650 0 0 0 .33-1.820 1.650 1.650 0 0 0-1.510-1H3a2 2 0 1 1 0-4h.09A1.650 1.650 0 0 0 4.600 9a1.650 1.650 0 0 0-.33-1.820l-.06-.06a2 2 0 1 1 2.830-2.830l.06.06a1.650 1.650 0 0 0 1.820.33H9a1.650 1.650 0 0 0 1-1.510V3a2 2 0 1 1 4 0v.09a1.650 1.650 0 0 0 1 1.510 1.650 1.650 0 0 0 1.820-.33l.06-.06a2 2 0 1 1 2.830 2.830l-.06.06a1.650 1.650 0 0 0-.33 1.820V9a1.650 1.650 0 0 0 1.510 1H21a2 2 0 1 1 0 4h-.09a1.650 1.650 0 0 0-1.510 1z"/></svg>
<div class="abs" style="left:1321px;top:6px;width:17px;height:17px;border-radius:9px;background:#f6a846;color:#fff;font-size:10px;font-weight:bold;line-height:17px;text-align:center">f</div>
<svg style="left:1331px;top:0px" width="12" height="10" viewBox="0 0 12 10"><path d="M1 6l1.500-5 2.500 3 2.500-3.500 1 4 3-1.500-3 6z" fill="#f5a23c"/></svg>
<svg style="left:1358px;top:8px" width="62" height="13" viewBox="0 0 62 13" fill="none" stroke="#7e7e7e" stroke-width="1.300"><path d="M2 6.500h10M26 2h8.500v8.500H26zM51 2l8.500 8.500M59.500 2L51 10.500"/></svg>


<!-- STAGE -->
<div class="abs" id="stage"></div>
<div class="abs" id="canvas">
<div class="abs" style="left:0;top:0;width:893px;height:501px;background:linear-gradient(180deg,#5a91fa 0%,#5f93fa 33%,#7aa0f9 46.500%,#90aff9 54%,#a8bcf9 61%,#c0c8f8 68.700%,#d0cdf5 76%,#dcd2ee 83.400%,#ead9e2 90.800%,#f4ddd5 100%)"></div>
<div class="abs" style="left:0;top:0;width:893px;height:501px;background:linear-gradient(180deg,#8c8ef9 0%,#8c8ef9 39.500%,#9392f9 44%,#a8a4f8 54%,#c0b8f8 64%,#d6cdf7 73.600%,#e6daf0 83.400%,#f0dcde 93%,#f4ddd6 100%);-webkit-mask-image:linear-gradient(90deg,rgba(0,0,0,0) 0%,#000 100%);mask-image:linear-gradient(90deg,rgba(0,0,0,0) 0%,#000 100%)"></div>
<div class="abs" id="cardsh"></div><div class="abs" style="left:45px;top:54px;width:804px;height:385px;box-shadow:0 0 26px rgba(5,15,70,.34)"></div>
<div class="abs" id="card">
 <!-- coordinates inside card: page(x-502,y-108) -->
 <div class="abs" style="left:464px;top:-20px;font-size:27px;line-height:30px;color:#2fb6a2;white-space:nowrap;filter:blur(.4px)">数据恢复</div>
 <div class="abs" style="left:127px;top:26.200px;width:677px;height:1.500px;background:#e2e4e4"></div>
 <div class="abs" style="left:338px;top:25.700px;width:360px;height:2px;background:#2cbba4"></div>
 <div class="abs" style="left:724px;top:65px;width:1px;height:390px;background:#e0e0e0"></div>
 <svg style="left:718px;top:190px" width="16" height="28" viewBox="0 0 16 28"><path d="M6 0v4l8 10-8 10v4" fill="#fff" stroke="#dcdcdc" stroke-width="1"/><rect x="0" y="3" width="6.500" height="22" fill="#fff"/></svg>
 <!-- item 1 -->
 <svg style="left:215px;top:84px" width="74" height="86" viewBox="0 0 74 86" filter="url(#blh)"><defs><linearGradient id="ph1" x1="0" y1="0" x2="0" y2="1"><stop offset="0" stop-color="#c9c0f5"/><stop offset="1" stop-color="#a3f0fb"/></linearGradient><linearGradient id="ph2" x1="0" y1="0" x2="0" y2="1"><stop offset="0" stop-color="#9a85ee"/><stop offset="1" stop-color="#33e3fb"/></linearGradient></defs><rect x="0" y="0" width="58" height="84" rx="2" fill="url(#ph1)"/><rect x="35" y="8" width="38" height="77" rx="6" fill="url(#ph2)" stroke="#f4f6ff" stroke-width="1.500"/><rect x="47" y="11.500" width="13" height="3" rx="1.500" fill="#e9e4fb"/></svg>
 <div class="abs t1" style="left:323px;top:87px">从iOS设备恢复数据</div>
 <div class="abs t2" style="left:323px;top:122px">适用于误删数据、忘记锁屏密码、或屏</div>
 <div class="abs t2" style="left:323px;top:146px">幕损坏等场景</div>
 <!-- item 2 -->
 <svg style="left:134px;top:253px" width="32" height="32" viewBox="0 0 32 32" filter="url(#blh)"><circle cx="16" cy="16" r="16" fill="#14b8a2"/><path d="M9 16.500l5 5 9.500-9.500" fill="none" stroke="#fff" stroke-width="3.200" stroke-linecap="round" stroke-linejoin="round"/></svg>
 <svg style="left:211px;top:228.500px" width="80" height="86" viewBox="0 0 80 86" filter="url(#blh)"><defs><linearGradient id="fg1" x1="0" y1="0" x2="0" y2="1"><stop offset="0" stop-color="#6393fb"/><stop offset=".5" stop-color="#60bfd4"/><stop offset="1" stop-color="#5cf595"/></linearGradient><linearGradient id="fg0" x1="0" y1="0" x2="0" y2="1"><stop offset="0" stop-color="#dbe5fc"/><stop offset="1" stop-color="#e2f9ea"/></linearGradient></defs><path d="M9.500-.5h45v18h20.300v55a2 2 0 0 1-2 2H9.500z" fill="url(#fg0)"/><path d="M47.600 6.300H67.800V24.800H50.600a3 3 0 0 1-3-3z" fill="#fff"/><path d="M1.300 8.300a2 2 0 0 1 2-2H47.600v15.500a3 3 0 0 0 3 3h17.200V81a2 2 0 0 1-2 2H3.300a2 2 0 0 1-2-2z" fill="url(#fg1)"/><path d="M19 41.100A17 17 0 1 1 25 60.800" fill="none" stroke="#fff" stroke-width="4.500" stroke-linecap="round"/><path d="M13 41.500l12 3.800-8 6.500z" fill="#fff" stroke="#fff" stroke-width="1" stroke-linejoin="round"/></svg>
 <div class="abs t1" style="left:323px;top:231px">从备份中恢复数据</div>
 <div class="abs t2" style="left:323px;top:266px">适用设备遗失或损毁，但在电脑中有</div>
 <div class="abs t2" style="left:323px;top:290px">iTunes或者其他备份。</div>
 <!-- item 3 -->
 <svg style="left:198px;top:380px" width="104" height="66" viewBox="0 0 104 66" filter="url(#blh)"><defs><linearGradient id="cg1" x1="0" y1="0" x2="0" y2="1"><stop offset="0" stop-color="#80bef5"/><stop offset="1" stop-color="#5cb6f7"/></linearGradient><linearGradient id="cg2" x1="0" y1="0" x2="1" y2="0"><stop offset="0" stop-color="#a6dff9"/><stop offset="1" stop-color="#7ccbf7"/></linearGradient><linearGradient id="cg3" x1="0" y1="0" x2="1" y2="0"><stop offset="0" stop-color="#5fb0f5"/><stop offset="1" stop-color="#6ea4f2"/></linearGradient><radialGradient id="cg4" gradientUnits="userSpaceOnUse" cx="55" cy="44" r="30"><stop offset="0" stop-color="#46b3f9"/><stop offset=".6" stop-color="#52b6f8" stop-opacity=".8"/><stop offset="1" stop-color="#6cc0f8" stop-opacity="0"/></radialGradient></defs><circle cx="19.500" cy="46.500" r="18.500" fill="url(#cg2)"/><circle cx="83.500" cy="47" r="17.500" fill="url(#cg3)"/><rect x="19" y="44" width="65" height="21" rx="9" fill="#7fcaf7"/><circle cx="26.500" cy="27.500" r="13.500" fill="#8fd5f8" opacity=".9"/><circle cx="58.800" cy="28" r="26.500" fill="url(#cg1)"/><clipPath id="cclip"><circle cx="19.500" cy="46.500" r="18.500"/><circle cx="83.500" cy="47" r="17.500"/><rect x="19" y="44" width="65" height="21" rx="9"/><circle cx="58.800" cy="28" r="26.500"/></clipPath><circle cx="55" cy="44" r="30" fill="url(#cg4)" clip-path="url(#cclip)"/><path d="M38.400 32A16 16 0 1 1 44.200 50.600" fill="none" stroke="#fff" stroke-width="4.400" stroke-linecap="round"/><path d="M33 32.500l11.500 3.500-7.500 6z" fill="#fff" stroke="#fff" stroke-width="1" stroke-linejoin="round"/></svg>
 <div class="abs t1" style="left:323px;top:375px">从 iCloud 恢复数据</div>
 <div class="abs t2" style="left:323px;top:410px">适用设备遗失或损毁，但在iCloud上有</div>
 <div class="abs t2" style="left:323px;top:434px">同步或者备份记录。</div>
 <!-- right partial column -->
 <div class="abs" style="left:787px;top:76px;font-size:27px;line-height:32px;color:#8a8a8a;filter:blur(.4px)">适</div>
 <svg style="left:790px;top:130px" width="20" height="320" viewBox="0 0 20 320" fill="none" stroke="#8d8d8d" stroke-width="1.800" filter="url(#blh)"><rect x="5.500" y="5" width="30" height="35" rx="3" stroke-dasharray="6 3"/><rect x="2.800" y="71" width="30" height="32" rx="3"/><path d="M15 80a7.500 7.500 0 0 0 0 14M11 88l-2.500 3 4 1"/><path d="M15.800 135.100A18 18 0 0 0 15.800 168.900M9 138l7-3.500-.5 7.500"/><path d="M14.500 198A20 20 0 0 0 14.500 236M14 214.500a5 5 0 1 0 3 9M5 213l10-7"/><rect x="2.800" y="270" width="30" height="21" rx="2"/></svg>
</div>
<!-- cursor: page (912,393) -> canvas (455,309) -->
<svg style="left:454px;top:308px" width="32" height="46" viewBox="0 0 32 46"><path d="M2.400 4.200V36.500l7-6.800 5 10.800 5.200-2.600-4.900-10.400h10.500z" fill="#fff" stroke="#000" stroke-width="2.400" stroke-linejoin="miter"/></svg>
<!-- webcam circle: page centre (545,497) → canvas (88,413) -->
<div class="abs" style="left:18px;top:343px;width:140px;height:140px;border-radius:50%;box-shadow:0 2px 14px 3px rgba(0,0,8,.62);background:#888"></div>
<svg style="left:18px;top:343px" width="140" height="140" viewBox="0 0 140 140"><use href="#woman"/></svg>

</div>

<!-- TIMELINE -->
<div class="abs" id="tbar"></div>
<div class="abs" id="tl"></div>
<!-- toolbar icons -->
<svg style="left:386px;top:596px" width="16" height="16" viewBox="0 0 16 16" fill="none" stroke="#f2f2f2" stroke-width="2.100" stroke-linecap="round"><path d="M1.200 2h13.800M1.200 14.600h13.800M1.200 8.500h2.300M13 8.500h2"/><path d="M5.300 5.600v5.800l5.200-2.900z" fill="#f2f2f2" stroke="none"/></svg>
<div class="abs vsep" style="left:417px;top:594px;height:20px;background:#262a3c"></div>
<svg style="left:432px;top:595px" width="18" height="18" viewBox="0 0 18 18" fill="none" stroke="#b2b2b2" stroke-width="1.900" stroke-linecap="round"><path d="M3.300 1.800v15M15.100 1.800v15M1.600 3.200h15.200M1.600 15.400h15.200M1.800 16.800L16.600 2"/></svg>
<svg style="left:468px;top:595px" width="18" height="18" viewBox="0 0 18 18" fill="none" stroke="#b2b2b2" stroke-width="2" stroke-linecap="round"><circle cx="4.400" cy="14" r="2.500"/><circle cx="13.600" cy="14" r="2.500"/><path d="M3.300 2.300l9 10M14.700 2.300l-9 10"/></svg>
<svg style="left:504px;top:595px" width="18" height="18" viewBox="0 0 18 18" fill="none" stroke="#b2b2b2" stroke-width="1.900" stroke-linecap="round" stroke-linejoin="round"><path d="M5.200 2.300h7.600l3.600 8H1.600zM3.400 14l-1.200 2.600M9 14v2.600M14.600 14l1.200 2.600"/></svg>
<svg style="left:540.500px;top:596px" width="17" height="17" viewBox="0 0 5 5" shape-rendering="crispEdges"><rect width="5" height="5" fill="#45464c"/><path d="M0 0h1v1H0zM2 0h1v1H2zM4 0h1v1H4zM1 1h1v1H1zM3 1h1v1H3zM0 2h1v1H0zM2 2h1v1H2zM4 2h1v1H4zM1 3h1v1H1zM3 3h1v1H3zM0 4h1v1H0zM2 4h1v1H2zM4 4h1v1H4z" fill="#b4b4b4"/></svg>
<svg style="left:834px;top:595px" width="18" height="18" viewBox="0 0 18 18" fill="none" stroke="#fff" stroke-width="1.700"><circle cx="9" cy="9" r="8"/><path d="M7 5.500v7l5.500-3.500z" fill="#fff" stroke="none"/></svg>
<div class="abs" style="left:863px;top:596px;font-size:12.500px;line-height:16px;color:#e4e4e4;white-space:nowrap;letter-spacing:-.1px">00:14.37 <span style="color:#6a6a6a;margin-left:3px;font-size:15px">/</span><span style="color:#858585;margin-left:6px;font-size:13px">00:32.49</span></div>
<svg style="left:1152px;top:596px" width="17" height="17" viewBox="0 0 17 17" fill="none" stroke="#d4d4d4" stroke-width="1.700" stroke-linejoin="round" stroke-linecap="round"><path d="M1.200 5.700L6.800 1.200V3.800C11.500 3.800 15 6.800 15 14.500 14.600 15.400 13.400 15.500 13 14.700 12.600 10.200 10.500 8.300 6.800 8.300V10.800Z"/></svg>
<svg style="left:1188px;top:596px" width="17" height="17" viewBox="0 0 17 17" fill="none" stroke="#48494d" stroke-width="1.700" stroke-linejoin="round" stroke-linecap="round"><path d="M15.800 5.700L10.200 1.200V3.800C5.500 3.800 2 6.800 2 14.500 2.400 15.400 3.600 15.500 4 14.700 4.400 10.200 6.500 8.300 10.200 8.300V10.800Z"/></svg>
<svg style="left:1225px;top:596px" width="16" height="17" viewBox="0 0 16 17" fill="none" stroke="#3b3c40" stroke-width="1.700" stroke-linecap="round" stroke-linejoin="round"><path d="M5 1.300h6M1 4.200h14M2.600 4.500v9.700a1.600 1.600 0 0 0 1.600 1.600h7.600a1.600 1.600 0 0 0 1.600-1.600V4.500"/><path d="M6.300 8v4.300M9.700 8v4.300" stroke-width="1.900" stroke-linecap="butt"/></svg>
<div class="abs vsep" style="left:1256px;top:595px;height:19px;background:#2a2c36"></div>
<svg style="left:1271px;top:596px" width="16" height="16" viewBox="0 0 16 16" fill="none" stroke="#d0d0d0" stroke-width="1.600" stroke-linecap="round"><circle cx="8" cy="8" r="7"/><path d="M4.500 8h7"/></svg>
<div class="abs" style="left:1298px;top:601px;width:60px;height:6px;border-radius:3px;background:#26282f"></div>
<div class="abs" style="left:1297px;top:598px;width:12px;height:12px;border-radius:6px;background:#c9c9c9"></div>
<svg style="left:1368px;top:596px" width="16" height="16" viewBox="0 0 16 16" fill="none" stroke="#d0d0d0" stroke-width="1.600" stroke-linecap="round"><circle cx="8" cy="8" r="7"/><path d="M4.500 8h7M8 4.500v7"/></svg>
<svg style="left:1403px;top:598px" width="17" height="12" viewBox="0 0 17 12" fill="none" stroke="#d8d8d8" stroke-width="1.700" stroke-linecap="round" stroke-linejoin="round"><path d="M1 6h15M4.500 2.500L1 6l3.500 3.500M12.500 2.500L16 6l-3.500 3.500"/></svg>
<!-- ruler -->
<div class="abs" style="left:371px;top:633px;width:1px;height:7px;background:#6a6a6a"></div>
<div class="abs tk" style="left:419px"></div><div class="abs tk" style="left:515px"></div><div class="abs tk" style="left:612px"></div><div class="abs tk" style="left:708px"></div><div class="abs tk" style="left:804px"></div><div class="abs tk" style="left:900px"></div><div class="abs tk" style="left:997px"></div><div class="abs tk" style="left:1093px"></div><div class="abs tk" style="left:1189px"></div><div class="abs tk" style="left:1285px"></div><div class="abs tk" style="left:1382px"></div>
<div class="abs rb" style="left:461.2px"></div><div class="abs rb" style="left:558.2px"></div><div class="abs rb" style="left:654.2px"></div><div class="abs rb" style="left:747.2px"></div><div class="abs rb" style="left:844.2px"></div><div class="abs rb" style="left:940.2px"></div><div class="abs rb" style="left:1036.2px"></div><div class="abs rb" style="left:1132.2px"></div><div class="abs rb" style="left:1229.2px"></div><div class="abs rb" style="left:1325.2px"></div><div class="abs rb" style="left:1422.2px"></div><div class="abs rl" style="left:467px">3s</div><div class="abs rl" style="left:564px">6s</div><div class="abs rl" style="left:660px">9s</div><div class="abs rl" style="left:756px">12s</div><div class="abs rl" style="left:853px">15s</div><div class="abs rl" style="left:949px">18s</div><div class="abs rl" style="left:1045px">21s</div><div class="abs rl" style="left:1141px">24s</div><div class="abs rl" style="left:1238px">27s</div><div class="abs rl" style="left:1334px">30s</div><div class="abs rl" style="left:1431px">33s</div>
<!-- clip -->
<div class="abs" id="clip"><div class="abs" style="left:0;top:18px;width:2px;height:32px;background:linear-gradient(rgba(200,130,255,0),#c684ff 40%,#c684ff)"></div></div>
<svg style="left:371px;top:690px" width="1053" height="12" viewBox="0 0 1053 12" fill="#2d1a66" opacity=".85"><path d="M45 12l2.500-4 1.500 1 2 3zM104 12l2-1.500 2 1.500zM128 12l1-2 1 2zM143 12l1.500-3.500 1 1.500 1 2zM163 12l1.500-1.500 1.500 1.500zM185 12l3-1 3 1zM228 12l2-1.500 2 1.500zM283 12l1.500-2 1.500 2zM290 12l1.500-3 1 3zM304 12l2-5 1.500 2 1 3zM345 12l3-1.500 3 1.500zM403 12l2-1.500 3 1.500zM488 12l1.500-3.500 2-2 1.500 4 1 1.500zM499 12l1.500-2 1.500 2zM552 12l1.500-2.500 1.500 2.500zM578 12l2.500-3.500 1-1.500 1.500 3 2 2zM600 12l2-1.500 2 1.500zM640 12l2-1.500 2 1.500zM700 12l2-2 2 2zM720 12l3-1.500 3 1.500zM762 12l3-1.500 3 1.500zM800 12l3-1.500 3 1.500zM848 12l2-1.500 2 1.500zM888 12l3-1.500 3 1.500zM958 12l2-1.500 2 1.500z"/></svg>
<svg style="left:381px;top:660px" width="17" height="15" viewBox="0 0 17 15" fill="none" stroke="#d9c7f7" stroke-width="1.500"><rect x="1" y="1" width="15" height="13" rx="1.500"/><path d="M6.500 4.500v6l5-3z" fill="#d9c7f7" stroke="none"/></svg>
<div class="abs" style="left:402px;top:659px;font-size:13.500px;line-height:17px;color:#dccdf7;white-space:pre;word-spacing:1.200px;letter-spacing:.25px">切片  32s  1.0x</div>
<!-- zoom clips -->
<div class="abs" id="z1"></div><div class="abs" id="z2"></div>
<svg style="left:723px;top:733px" width="16" height="16" viewBox="0 0 16 16" fill="none" stroke="#e6ecff" stroke-width="1.500"><circle cx="8" cy="8" r="7"/><path d="M5 4.500l6.500 2.800-2.800 1-1 2.900z" fill="#e6ecff" stroke="none"/></svg>
<div class="abs" style="left:745px;top:732px;font-size:14px;line-height:18px;color:#e8eeff;white-space:pre">缩放  2.0x</div>
<svg style="left:1344px;top:733px" width="16" height="16" viewBox="0 0 16 16" fill="none" stroke="#e6ecff" stroke-width="1.500"><circle cx="8" cy="8" r="7"/><path d="M5 4.500l6.500 2.800-2.800 1-1 2.900z" fill="#e6ecff" stroke="none"/></svg>
<div class="abs" style="left:1366px;top:732px;font-size:13px;line-height:18px;color:#e8eeff;white-space:pre">缩...</div>
<!-- spotlight -->
<div class="abs" id="spot"></div>
<div class="abs" style="left:803px;top:790px;width:200px;text-align:center;font-size:12px;line-height:16px;color:#454545">点击添加聚光灯</div>
<!-- playhead -->
<div class="abs" id="ph"></div>
<div class="abs" style="left:835.500px;top:626.500px;width:10px;height:6.500px;border-radius:1px 1px 6px 6px;background:#f3a844"></div>
<div class="abs" style="left:370px;top:34px;width:1.300px;height:804px;background:#1a1a1f"></div>

</body>
</html>
